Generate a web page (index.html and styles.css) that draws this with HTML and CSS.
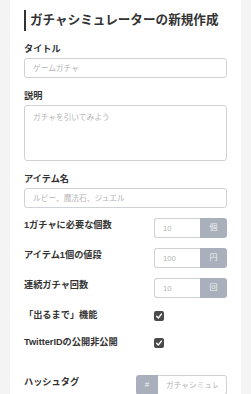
FILE: index.html
```html
<!DOCTYPE html>
<html lang="ja">
<head>
    <meta charset="UTF-8">
    <meta name="viewport" content="width=device-width, initial-scale=1.0">
    <title>ガチャシミュレーターの新規作成</title>
    <link rel="stylesheet" href="styles.css">
</head>
<body>

<div class="card">
    <h1>ガチャシミュレーターの新規作成</h1>

    <div class="field">
        <label for="title">タイトル</label>
        <input type="text" id="title" placeholder="ゲームガチャ">
    </div>

    <div class="field">
        <label for="desc">説明</label>
        <textarea id="desc" placeholder="ガチャを引いてみよう"></textarea>
    </div>

    <div class="field last">
        <label for="items">アイテム名</label>
        <input type="text" id="items" placeholder="ルビー、魔法石、ジュエル">
    </div>

    <div class="row">
        <label for="cost">1ガチャに必要な個数</label>
        <div class="group">
            <input type="text" id="cost" placeholder="10">
            <span class="addon">個</span>
        </div>
    </div>

    <div class="row">
        <label for="price">アイテム1個の値段</label>
        <div class="group">
            <input type="text" id="price" placeholder="100">
            <span class="addon">円</span>
        </div>
    </div>

    <div class="row gap-check">
        <label for="count">連続ガチャ回数</label>
        <div class="group">
            <input type="text" id="count" placeholder="10">
            <span class="addon">回</span>
        </div>
    </div>

    <div class="row check-row">
        <label>「出るまで」機能</label>
        <div class="box">
            <span class="check">
                <svg viewBox="0 0 10 10" width="10" height="10"><path d="M2.6 5.3 L4.3 7 L7.5 3" fill="none" stroke="#fff" stroke-width="1.3" stroke-linecap="round" stroke-linejoin="round"/></svg>
            </span>
        </div>
    </div>

    <div class="row check-row wide">
        <label>TwitterIDの公開非公開</label>
        <div class="box">
            <span class="check">
                <svg viewBox="0 0 10 10" width="10" height="10"><path d="M2.6 5.3 L4.3 7 L7.5 3" fill="none" stroke="#fff" stroke-width="1.3" stroke-linecap="round" stroke-linejoin="round"/></svg>
            </span>
        </div>
    </div>

    <div class="row">
        <label for="tag">ハッシュタグ</label>
        <div class="group tag">
            <span class="addon">#</span>
            <input type="text" id="tag" placeholder="ガチャシミュレーター">
        </div>
    </div>
</div>

</body>
</html>
```

FILE: styles.css
```css
body {
    margin: 0;
    background-color: #f4f4f4;
    font-family: "Liberation Sans", "Noto Sans CJK JP", sans-serif;
    color: #333;
}

.card {
    margin: 0 10px;
    padding: 10px 14px 20px;
    background-color: #fff;
}

h1 {
    margin: 0 0 12px;
    height: 21px;
    line-height: 21px;
    padding-left: 4px;
    border-left: 2px solid #333;
    font-size: 12.6px;
    font-weight: bold;
    white-space: nowrap;
}

label {
    display: block;
    font-size: 9.2px;
    font-weight: bold;
    line-height: 12px;
    white-space: nowrap;
}

.field {
    margin-bottom: 12px;
}

.field.last {
    margin-bottom: 10px;
}

.field label {
    margin-bottom: 3px;
}

input, textarea {
    display: block;
    width: 100%;
    box-sizing: border-box;
    border: 1px solid #cfd3d8;
    border-radius: 3px;
    font-family: inherit;
    font-size: 7.7px;
    color: #333;
    outline: none;
}

input {
    height: 20px;
    padding: 0 8px;
}

textarea {
    height: 56px;
    padding: 5px 8px;
    resize: none;
}

::placeholder {
    color: #b4b4b4;
}

.row {
    display: flex;
    justify-content: space-between;
    align-items: flex-start;
    margin-bottom: 10px;
}

.row.gap-check {
    margin-bottom: 11px;
}

.row label {
    margin-top: 1px;
}

.group {
    display: flex;
    width: 73px;
    height: 20px;
}

.group input {
    flex: 1;
    min-width: 0;
    height: 20px;
    border-radius: 3px 0 0 3px;
    border-right: none;
}

.addon {
    width: 27px;
    height: 20px;
    line-height: 20px;
    text-align: center;
    background-color: #a9b0bc;
    color: #eef0f3;
    font-size: 8px;
    border-radius: 0 3px 3px 0;
}

.group.tag {
    width: 91px;
}

.group.tag .addon {
    width: 22px;
    border-radius: 3px 0 0 3px;
}

.group.tag input {
    border-right: 1px solid #cfd3d8;
    border-left: none;
    border-radius: 0 3px 3px 0;
}

.check-row {
    margin-bottom: 15px;
}

.check-row.wide {
    margin-bottom: 27px;
}

.check-row label {
    margin-top: 0;
}

.box {
    width: 73px;
    padding-top: 2px;
}

.check {
    display: block;
    width: 10px;
    height: 10px;
    border-radius: 2px;
    background-color: #4a4a4a;
}

.check svg {
    display: block;
}
```
